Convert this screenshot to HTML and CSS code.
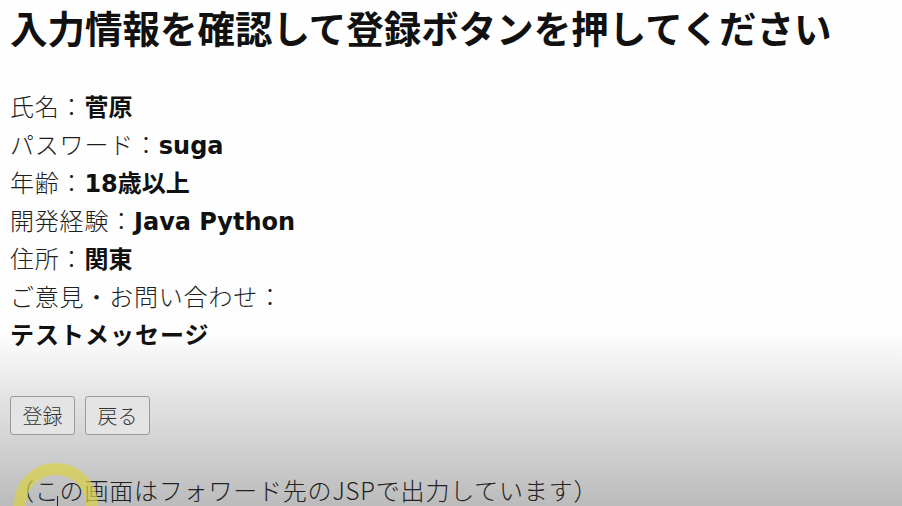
FILE: index.html
```html
<!DOCTYPE html>
<html lang="ja">
<head>
<meta charset="utf-8">
<title>確認画面</title>
<link rel="stylesheet" href="styles.css">
</head>
<body>
<h1 class="title">入力情報を確認して登録ボタンを押してください</h1>
<div class="info">
  <div class="row">氏名：<b>菅原</b></div>
  <div class="row">パスワード：<b>suga</b></div>
  <div class="row">年齢：<b>18歳以上</b></div>
  <div class="row">開発経験：<b>Java Python</b></div>
  <div class="row">住所：<b>関東</b></div>
  <div class="row">ご意見・お問い合わせ：</div>
  <div class="row"><b class="wide">テストメッセージ</b></div>
</div>
<form class="actions">
  <button type="button" class="btn">登録</button>
  <button type="button" class="btn">戻る</button>
</form>
<p class="note">（この画面はフォワード先のJSPで出力しています）</p>
<div class="cursor-ring"></div>
<div class="cursor-beam"></div>
</body>
</html>
```
FILE: styles.css
```css
html {
  height: 100%;
  overflow: hidden;
}
body {
  margin: 0;
  padding: 0 10px;
  height: 506px;
  overflow: hidden;
  position: relative;
  font-family: "DejaVu Sans", "Noto Sans CJK JP", sans-serif;
  color: #1e1e1e;
  background: linear-gradient(to bottom, #fefefe 0, #fdfdfd 335px, #e6e6e6 390px, #bbbbbb 506px);
}
.title {
  margin: 7px 0 0;
  font-size: 37.5px;
  line-height: 46px;
  font-weight: bold;
  color: #111;
  white-space: nowrap;
}
.info {
  margin-top: 36px;
}
.row {
  font-size: 24px;
  line-height: 38px;
  height: 38px;
  white-space: nowrap;
  font-weight: 300;
  letter-spacing: 0.8px;
}
.row b {
  font-weight: bold;
  color: #111;
  letter-spacing: 0;
}
.row b.wide {
  letter-spacing: 1px;
}
.actions {
  margin: 41px 0 0;
  display: flex;
  gap: 10px;
}
.btn {
  width: 65px;
  height: 39px;
  padding: 0;
  font-family: "Noto Sans CJK JP", sans-serif;
  font-size: 20px;
  font-weight: 300;
  color: #333;
  background: #e4e4e4;
  border: 1px solid #9a9a9a;
  border-radius: 3px;
}
.note {
  margin: 36px 0 0;
  height: 35px;
  font-size: 24px;
  line-height: 38px;
  font-weight: 300;
  letter-spacing: 0.8px;
  white-space: nowrap;
  font-family: "Noto Sans CJK JP", sans-serif;
  color: #222;
}
.cursor-ring {
  position: absolute;
  left: 14px;
  top: 463px;
  width: 60px;
  height: 60px;
  border: 12px solid rgba(216, 208, 70, 0.7);
  border-radius: 50%;
  pointer-events: none;
}
.cursor-beam {
  position: absolute;
  left: 57px;
  top: 496px;
  width: 1px;
  height: 10px;
  background: #222;
}
```
